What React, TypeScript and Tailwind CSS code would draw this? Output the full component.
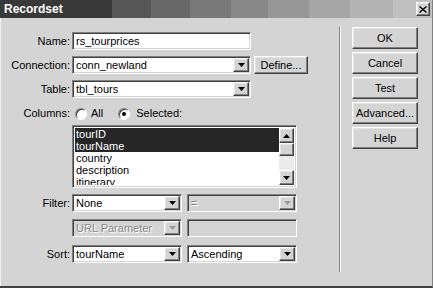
import React from "react";

const sunken =
  "border border-t-[#808080] border-l-[#808080] border-b-white border-r-white shadow-[inset_1px_1px_0_#404040,inset_-1px_-1px_0_#d4d4d4]";
const raised =
  "border border-t-white border-l-white border-b-[#404040] border-r-[#404040] shadow-[inset_-1px_-1px_0_#808080,inset_1px_1px_0_#e4e4e4]";

function Arrow({ up = false, disabled = false }: { up?: boolean; disabled?: boolean }) {
  return (
    <svg width="7" height="4" viewBox="0 0 7 4">
      <path
        d={up ? "M0 4 L7 4 L3.5 0 Z" : "M0 0 L7 0 L3.5 4 Z"}
        fill={disabled ? "#9a9a9a" : "#000"}
      />
    </svg>
  );
}

function DropBtn({ disabled = false }: { disabled?: boolean }) {
  return (
    <div className={`w-[16px] h-full flex items-center justify-center bg-[#d4d4d4] ${raised}`}>
      <Arrow disabled={disabled} />
    </div>
  );
}

function Select({
  w,
  text,
  disabled = false,
}: {
  w: string;
  text: string;
  disabled?: boolean;
}) {
  return (
    <div className={`${w} h-[18px] flex p-[1px] ${sunken} ${disabled ? "bg-[#d4d4d4]" : "bg-white"}`}>
      <div
        className={`flex-1 pl-[2px] leading-[14px] truncate ${
          disabled ? "text-[#8a8a8a] [text-shadow:1px_1px_0_#fff]" : "text-black"
        }`}
      >
        {text}
      </div>
      <DropBtn disabled={disabled} />
    </div>
  );
}

function Label({ children }: { children: React.ReactNode }) {
  return <div className="w-[70px] text-right pr-[1px] shrink-0">{children}</div>;
}

function Btn({ children, w = "w-[66px]", h = "h-[22px]" }: { children: React.ReactNode; w?: string; h?: string }) {
  return (
    <div className={`${w} ${h} flex items-center justify-center bg-[#d4d4d4] ${raised}`}>{children}</div>
  );
}

function Radio({ checked }: { checked: boolean }) {
  return (
    <div className="w-[12px] h-[12px] rounded-full border border-t-[#808080] border-l-[#808080] border-b-white border-r-white bg-white flex items-center justify-center shadow-[inset_1px_1px_0_#404040]">
      {checked && <div className="w-[4px] h-[4px] rounded-full bg-black" />}
    </div>
  );
}

export default function App() {
  const items = ["tourID", "tourName", "country", "description", "itinerary"];
  return (
    <div className="w-[433px] h-[288px] flex flex-col bg-[#d4d4d4] font-['Liberation_Sans',Arial,sans-serif] text-[11px] text-black border-b-2 border-b-[#404040] border-r border-r-[#808080] overflow-hidden">
      {/* title bar */}
      <div className="h-[18px] shrink-0 flex items-center pl-[4px] pr-[2px] bg-[linear-gradient(to_right,#383838_0_26%,#575757_26%_35%,#686868_35%_44%,#787878_44%_53.5%,#878787_53.5%_62%,#969696_62%_71.5%,#a5a5a5_71.5%_81%,#b3b3b3_81%_91%,#bfbfbf_91%_100%)]">
        <div className="flex-1 text-white font-bold text-[12px] leading-[18px]">Recordset</div>
        <div className={`w-[14px] h-[14px] flex items-center justify-center bg-[#d4d4d4] ${raised}`}>
          <svg width="8" height="7" viewBox="0 0 8 7">
            <path d="M0.5 0.5 L7.5 6.5 M7.5 0.5 L0.5 6.5" stroke="#000" strokeWidth="1.4" />
          </svg>
        </div>
      </div>

      {/* body */}
      <div className="flex flex-1 border-l border-l-[#f0f0f0]">
        {/* left form */}
        <div className="w-[338px] shrink-0 flex flex-col pt-[14px]">
          <div className="flex items-center h-[18px]">
            <Label>Name:</Label>
            <div className={`ml-[1px] w-[179px] h-[18px] bg-white pl-[3px] leading-[16px] ${sunken}`}>rs_tourprices</div>
          </div>

          <div className="flex items-center h-[18px] mt-[6px]">
            <Label>Connection:</Label>
            <div className="ml-[1px]">
              <Select w="w-[179px]" text="conn_newland" />
            </div>
            <div className="ml-[3px]">
              <Btn w="w-[54px]" h="h-[18px]">Define...</Btn>
            </div>
          </div>

          <div className="flex items-center h-[18px] mt-[6px]">
            <Label>Table:</Label>
            <div className="ml-[1px]">
              <Select w="w-[179px]" text="tbl_tours" />
            </div>
          </div>

          <div className="flex items-center h-[13px] mt-[9px]">
            <Label>Columns:</Label>
            <div className="ml-[4px]">
              <Radio checked={false} />
            </div>
            <div className="ml-[4px]">All</div>
            <div className="ml-[15px]">
              <Radio checked={true} />
            </div>
            <div className="ml-[6px]">Selected:</div>
          </div>

          <div className={`ml-[71px] mt-[5px] w-[225px] h-[63px] bg-white flex p-[2px] ${sunken}`}>
            <div className="flex-1 flex flex-col overflow-hidden">
              {items.map((t, i) => (
                <div
                  key={t}
                  className={`h-[12px] leading-[12px] pl-[1px] shrink-0 ${
                    i < 2 ? "bg-[#262626] text-white" : "text-black"
                  }`}
                >
                  {t}
                </div>
              ))}
            </div>
            <div className="w-[15px] flex flex-col bg-[#ebebeb]">
              <div className={`h-[15px] flex items-center justify-center bg-[#d4d4d4] ${raised}`}>
                <Arrow up />
              </div>
              <div className={`h-[13px] bg-[#d4d4d4] ${raised}`} />
              <div className="flex-1" />
              <div className={`h-[15px] flex items-center justify-center bg-[#d4d4d4] ${raised}`}>
                <Arrow />
              </div>
            </div>
          </div>

          <div className="flex items-center h-[18px] mt-[6px]">
            <Label>Filter:</Label>
            <div className="ml-[1px]">
              <Select w="w-[110px]" text="None" />
            </div>
            <div className="ml-[5px]">
              <Select w="w-[110px]" text="=" disabled />
            </div>
          </div>

          <div className="flex items-center h-[18px] mt-[7px]">
            <div className="ml-[71px]">
              <Select w="w-[110px]" text="URL Parameter" disabled />
            </div>
            <div className={`ml-[5px] w-[110px] h-[18px] bg-[#d4d4d4] ${sunken}`} />
          </div>

          <div className="flex items-center h-[18px] mt-[8px]">
            <Label>Sort:</Label>
            <div className="ml-[1px]">
              <Select w="w-[110px]" text="tourName" />
            </div>
            <div className="ml-[5px]">
              <Select w="w-[110px]" text="Ascending" />
            </div>
          </div>
        </div>

        {/* separator */}
        <div className="mt-[9px] h-[245px] w-[2px] shrink-0 border-l border-l-[#808080] border-r border-r-white" />

        {/* buttons */}
        <div className="flex flex-col gap-[3px] pt-[9px] ml-[11px]">
          <Btn>OK</Btn>
          <Btn>Cancel</Btn>
          <Btn>Test</Btn>
          <Btn>Advanced...</Btn>
          <Btn>Help</Btn>
        </div>
      </div>
    </div>
  );
}
